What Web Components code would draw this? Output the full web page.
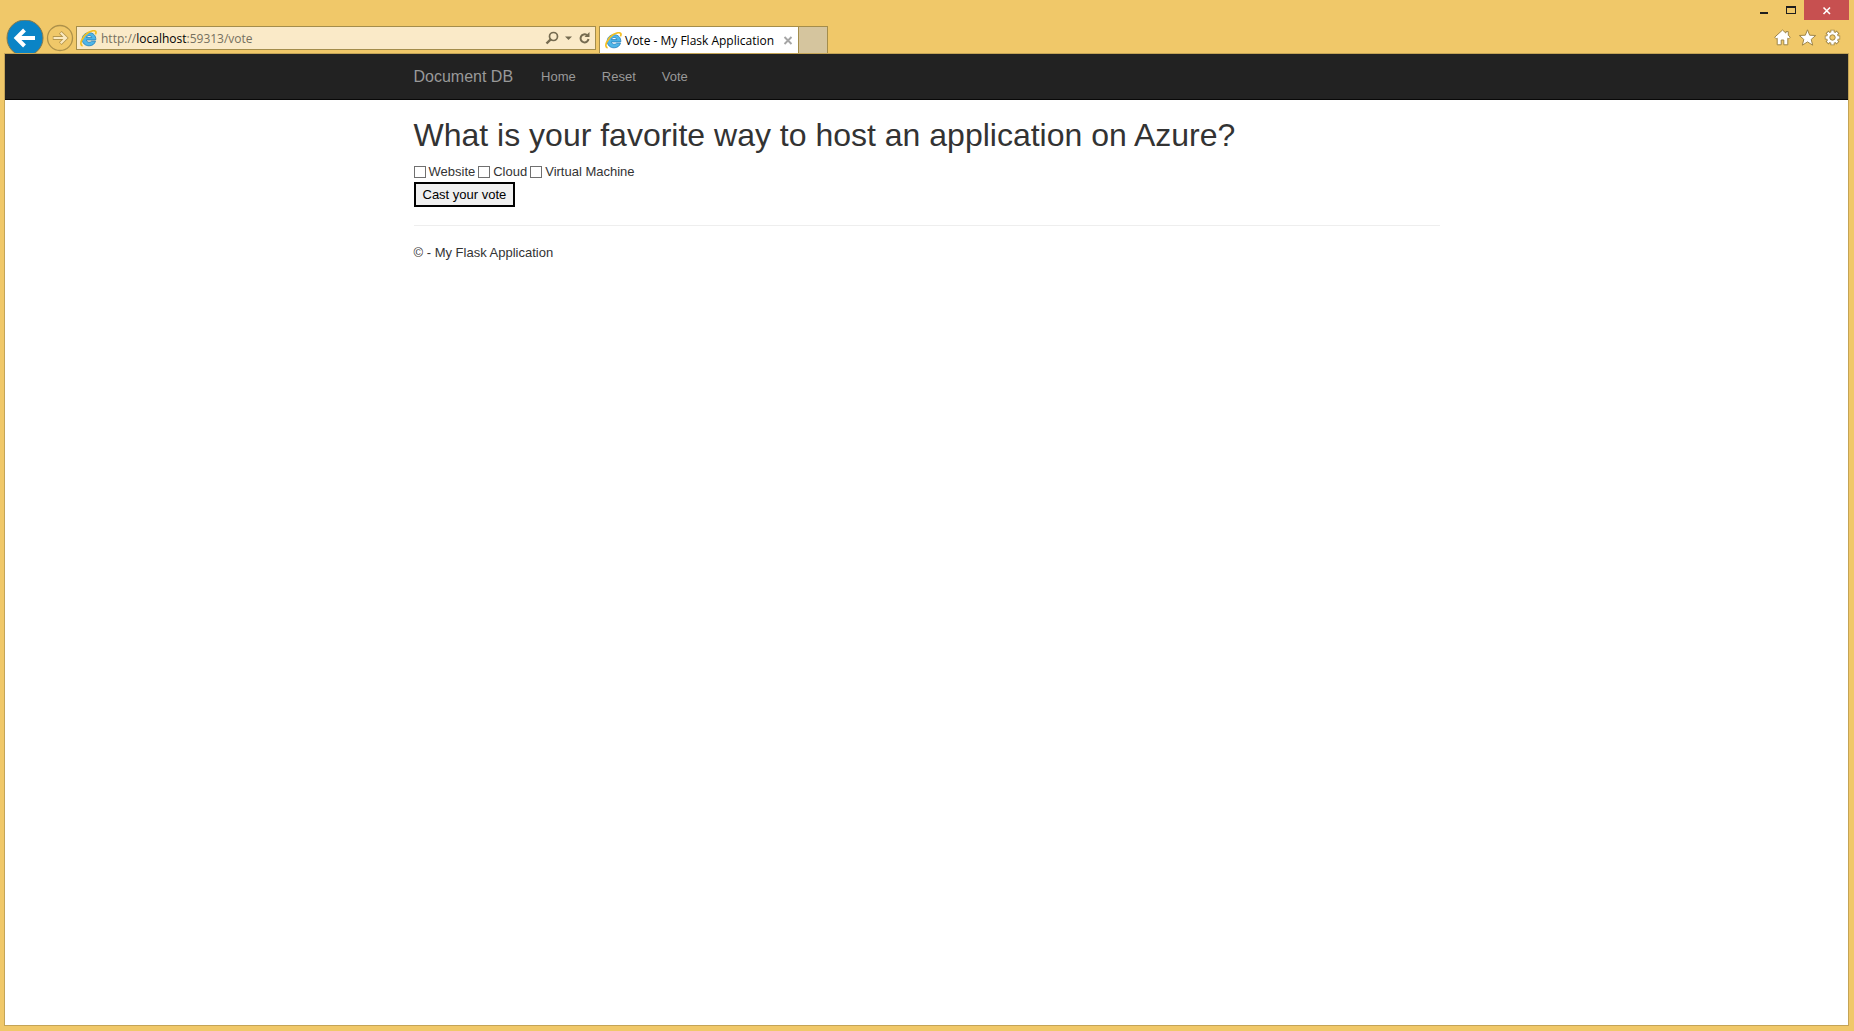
<!DOCTYPE html>
<html lang="en">
<head>
<meta charset="utf-8">
<title>Vote - My Flask Application</title>
<style>
  html, body { height: 100%; margin: 0; }
  body { font-family: "Liberation Sans", Arial, sans-serif; font-size: 13px; line-height: 18px; color: #333; }
</style>
</head>
<body>
<browser-window>
  <window-controls slot="controls"></window-controls>
  <browser-toolbar slot="toolbar">
    <address-bar slot="address"></address-bar>
    <browser-tab slot="tabs">Vote - My Flask Application</browser-tab>
  </browser-toolbar>
  <site-navbar>
    <nav-item brand>Document DB</nav-item>
    <nav-item>Home</nav-item>
    <nav-item>Reset</nav-item>
    <nav-item>Vote</nav-item>
  </site-navbar>
  <page-container>
    <page-title>What is your favorite way to host an application on Azure?</page-title>
    <vote-form></vote-form>
    <page-footer>© - My Flask Application</page-footer>
  </page-container>
</browser-window>

<script>
const define = (name, html) => customElements.define(name, class extends HTMLElement {
  constructor() {
    super();
    this.attachShadow({ mode: 'open' }).innerHTML = '<style>*{box-sizing:border-box}:host{box-sizing:border-box}</style>' + html;
  }
});

define('browser-window', `
<style>
  :host { display: flex; flex-direction: column; min-height: 100%; background: #f0c869; padding: 0 5px 5px 4px; }
  main { flex: 1; background: #fff; border: 1px solid #c4a456; }
</style>
<slot name="controls"></slot>
<slot name="toolbar"></slot>
<main><slot></slot></main>`);

define('window-controls', `
<style>
  :host { display: flex; justify-content: flex-end; height: 20px; }
  button { width: 27px; height: 20px; padding: 0; border: 0; background: none; display: block; }
  button.close { width: 45px; background: #c75050; }
  svg { display: block; width: 100%; height: 100%; }
</style>
<button aria-label="Minimize"><svg viewBox="0 0 27 20"><path d="M10 12h8v2h-8z" fill="#1e1e1e"/></svg></button>
<button aria-label="Maximize"><svg viewBox="0 0 27 20"><path d="M9 6h10v8h-10zM10 8v5h8v-5z" fill="#1e1e1e" fill-rule="evenodd"/></svg></button>
<button class="close" aria-label="Close"><svg viewBox="0 0 45 20"><path d="M19.500 7.500l6.500 6.500M26 7.500l-6.500 6.500" stroke="#fff" stroke-width="1.600"/></svg></button>`);

define('browser-toolbar', `
<style>
  :host { display: flex; height: 33px; align-items: flex-end; overflow: hidden; }
  button { border: 0; padding: 0; background: none; display: block; flex: none; }
  svg { display: block; overflow: visible; }
  .back { width: 40px; height: 35px; align-self: flex-start; }
  .forward { width: 32px; height: 33px; }
  .address { flex: 0 1 520px; height: 27px; min-width: 0; }
  .tabs { display: flex; align-items: flex-end; margin-left: 3px; }
  .newtab { width: 29px; height: 27px; background: #d5c59e; border: 1px solid #a48d4b; border-width: 1px 1px 0 0; }
  .tools { display: flex; gap: 8px; margin-left: auto; padding-right: 8px; height: 24px; align-items: flex-start; }
</style>
<button class="back" aria-label="Back"><svg width="40" height="35" viewBox="0 0 40 35"><circle cx="21" cy="18" r="18" fill="#0a84c6" stroke="#8a7a49"/><path d="M31 18H13.500M20.500 10L12.500 18l8 8" fill="none" stroke="#fff" stroke-width="4"/></svg></button>
<button class="forward" aria-label="Forward"><svg width="32" height="33" viewBox="0 0 32 33"><circle cx="16" cy="18" r="12.500" fill="none" stroke="#ad914a" stroke-width="1.300"/><g fill="none"><path d="M8.800 18H22M16.300 12.300L22 18l-5.700 5.700" stroke="#b4964d" stroke-width="3.800"/><path d="M9.500 18H22M16.700 12.700L22 18l-5.300 5.300" stroke="#fbe9bf" stroke-width="2.200"/></g></svg></button>
<div class="address"><slot name="address"></slot></div>
<div class="tabs"><slot name="tabs"></slot><button class="newtab" aria-label="New tab"></button></div>
<div class="tools">
  <button aria-label="Home"><svg width="17" height="18" viewBox="0 0 17 18"><path d="M8.500 1L.7 8.200l1.600 1.700.9-.7v6.600h4V11h2.600v4.800h4V9.200l.9.700 1.600-1.700-2-1.900V2.600h-2.400v1.500z" fill="#fff" stroke="#9f8648"/></svg></button>
  <button aria-label="Favorites"><svg width="17" height="18" viewBox="0 0 17 18"><path d="M8.500.8l2.200 5.400 6 .3-4.500 3.900 1.500 5.800-5.200-3.300-5.200 3.300 1.500-5.800L.3 6.500l6-.3z" fill="#fff" stroke="#9f8648"/></svg></button>
  <button aria-label="Tools"><svg width="17" height="18" viewBox="0 0 17 18"><path d="M8.500.8v15.400M.8 8.500h15.400M3 3l11 11M3 14L14 3" stroke="#9f8648" stroke-width="4.200"/><circle cx="8.500" cy="8.500" r="6" fill="#9f8648"/><path d="M8.500 1.600v13.800M1.600 8.500h13.800M3.600 3.600l9.800 9.800M3.600 13.400l9.800-9.800" stroke="#fff" stroke-width="2.400"/><circle cx="8.500" cy="8.500" r="5.400" fill="#fff"/><circle cx="8.500" cy="8.500" r="2.700" fill="#f0c869" stroke="#9f8648"/></svg></button>
</div>`);

const IE = `<svg class="ie" width="17" height="17" viewBox="0 0 17 17" aria-hidden="true">
<path d="M15.800 9.900H6.400c.2 1.500 1.200 2.400 2.700 2.400 1.100 0 1.900-.4 2.300-1.100h4.100c-.9 2.900-3.200 4.600-6.400 4.600-4 0-6.900-2.700-6.900-6.500s2.900-6.600 6.900-6.600c4.200 0 6.900 2.900 6.700 7.200zM6.500 7.600h5.200c-.2-1.300-1.100-2.100-2.500-2.100S6.700 6.300 6.500 7.600z" fill="#4fb6e8" stroke="#1f7cbb" stroke-width=".8"/>
<path d="M2.600 15.900C-1.500 15 2.200 6.300 8.300 2.600 12 .3 15.700.2 16 2c.1.700-.1 1.500-.6 2.400" fill="none" stroke="#f4bf22" stroke-width="1.700"/></svg>`;

define('address-bar', `
<style>
  :host { display: block; }
  form { display: flex; align-items: center; height: 24px; margin: 0; background: #faeac8; border: 1px solid #a48d4b; padding: 0 1px 0 3px; }
  svg { display: block; flex: none; }
  .url { flex: 1; margin-left: 4px; padding-top: 1px; min-width: 0; font: 12px/18px "Open Sans", "Noto Sans", sans-serif; color: #75705f; white-space: nowrap; }
  b { font-weight: 400; color: #000; }
  button { border: 0; padding: 0; background: none; display: block; }
</style>
<form>
  ${IE}
  <div class="url" role="textbox" aria-label="Address" contenteditable="true" spellcheck="false">http://<b>localhost</b>:59313/vote</div>
  <button type="button" aria-label="Search"><svg width="18" height="18" viewBox="0 0 18 18"><circle cx="10.500" cy="7.500" r="4" fill="none" stroke="#756b50" stroke-width="1.700"/><path d="M7.700 10.300L3.500 14.500" stroke="#756b50" stroke-width="2.400"/></svg></button>
  <button type="button" aria-label="Show suggestions"><svg width="15" height="18" viewBox="0 0 15 18"><path d="M4 7.500h7L7.500 11z" fill="#756b50"/></svg></button>
  <button type="button" aria-label="Refresh"><svg width="18" height="18" viewBox="0 0 18 18"><path d="M11 6.200A4 4 0 1 0 12.500 10" fill="none" stroke="#756b50" stroke-width="2"/><path d="M8.500 8H13.500V3z" fill="#756b50"/></svg></button>
</form>`);

define('browser-tab', `
<style>
  :host { display: flex; align-items: center; width: 200px; height: 27px; padding: 1px 5px 0; background: #fff; border: 1px solid #a48d4b; border-bottom: 0; font: 12px/18px "Open Sans", "Noto Sans", sans-serif; color: #000; white-space: nowrap; }
  span { flex: 1; margin-left: 3px; }
  svg { display: block; flex: none; }
  button { border: 0; padding: 0; background: none; display: block; }
</style>
${IE}<span><slot></slot></span>
<button aria-label="Close tab"><svg width="10" height="14" viewBox="0 0 10 14"><path d="M1.500 3l7 7M8.500 3l-7 7" stroke="#a5a5a5" stroke-width="1.900"/></svg></button>`);

define('site-navbar', `
<style>
  :host { display: block; background: #222; border-bottom: 1px solid #080808; }
  nav { display: flex; width: 1026px; max-width: calc(100% - 28px); margin: 0 auto; height: 45px; align-items: center; }
</style>
<nav><slot></slot></nav>`);

define('nav-item', `
<style>
  :host { display: block; padding: 0 13px; }
  :host([brand]) { padding: 0 15px 0 0; font-size: 16px; }
  a { color: #999; text-decoration: none; }
</style>
<a href="#"><slot></slot></a>`);

define('page-container', `
<style>:host { display: block; width: 1026px; max-width: calc(100% - 28px); margin: 0 auto; }</style>
<slot></slot>`);

define('page-title', `
<style>
  :host { display: block; }
  h2 { margin: 18px 0 9px; font-size: 32px; font-weight: 400; line-height: 35px; }
</style>
<h2><slot></slot></h2>`);

define('vote-form', `
<style>
  :host { display: block; }
  form { margin: 0; }
  .choices { display: flex; gap: 3px; height: 20px; }
  label { display: flex; align-items: center; gap: 3px; }
  input { appearance: none; width: 12px; height: 12px; margin: 0; border: 1px solid #707070; background: #fff; }
  button { display: block; height: 25px; padding: 0 7px; font: inherit; color: #000; background: #f0f0f0; border: 2px solid #000; outline: none; white-space: nowrap; }
</style>
<form>
  <div class="choices">
    <label><input type="checkbox" name="deploy">Website</label>
    <label><input type="checkbox" name="deploy">Cloud</label>
    <label><input type="checkbox" name="deploy">Virtual Machine</label>
  </div>
  <button type="button">Cast your vote</button>
</form>`);

define('page-footer', `
<style>
  :host { display: block; }
  hr { margin: 18px 0; border: 0; border-top: 1px solid #eee; }
  p { margin: 0; }
</style>
<hr><footer><p><slot></slot></p></footer>`);
</script>
</body>
</html>
